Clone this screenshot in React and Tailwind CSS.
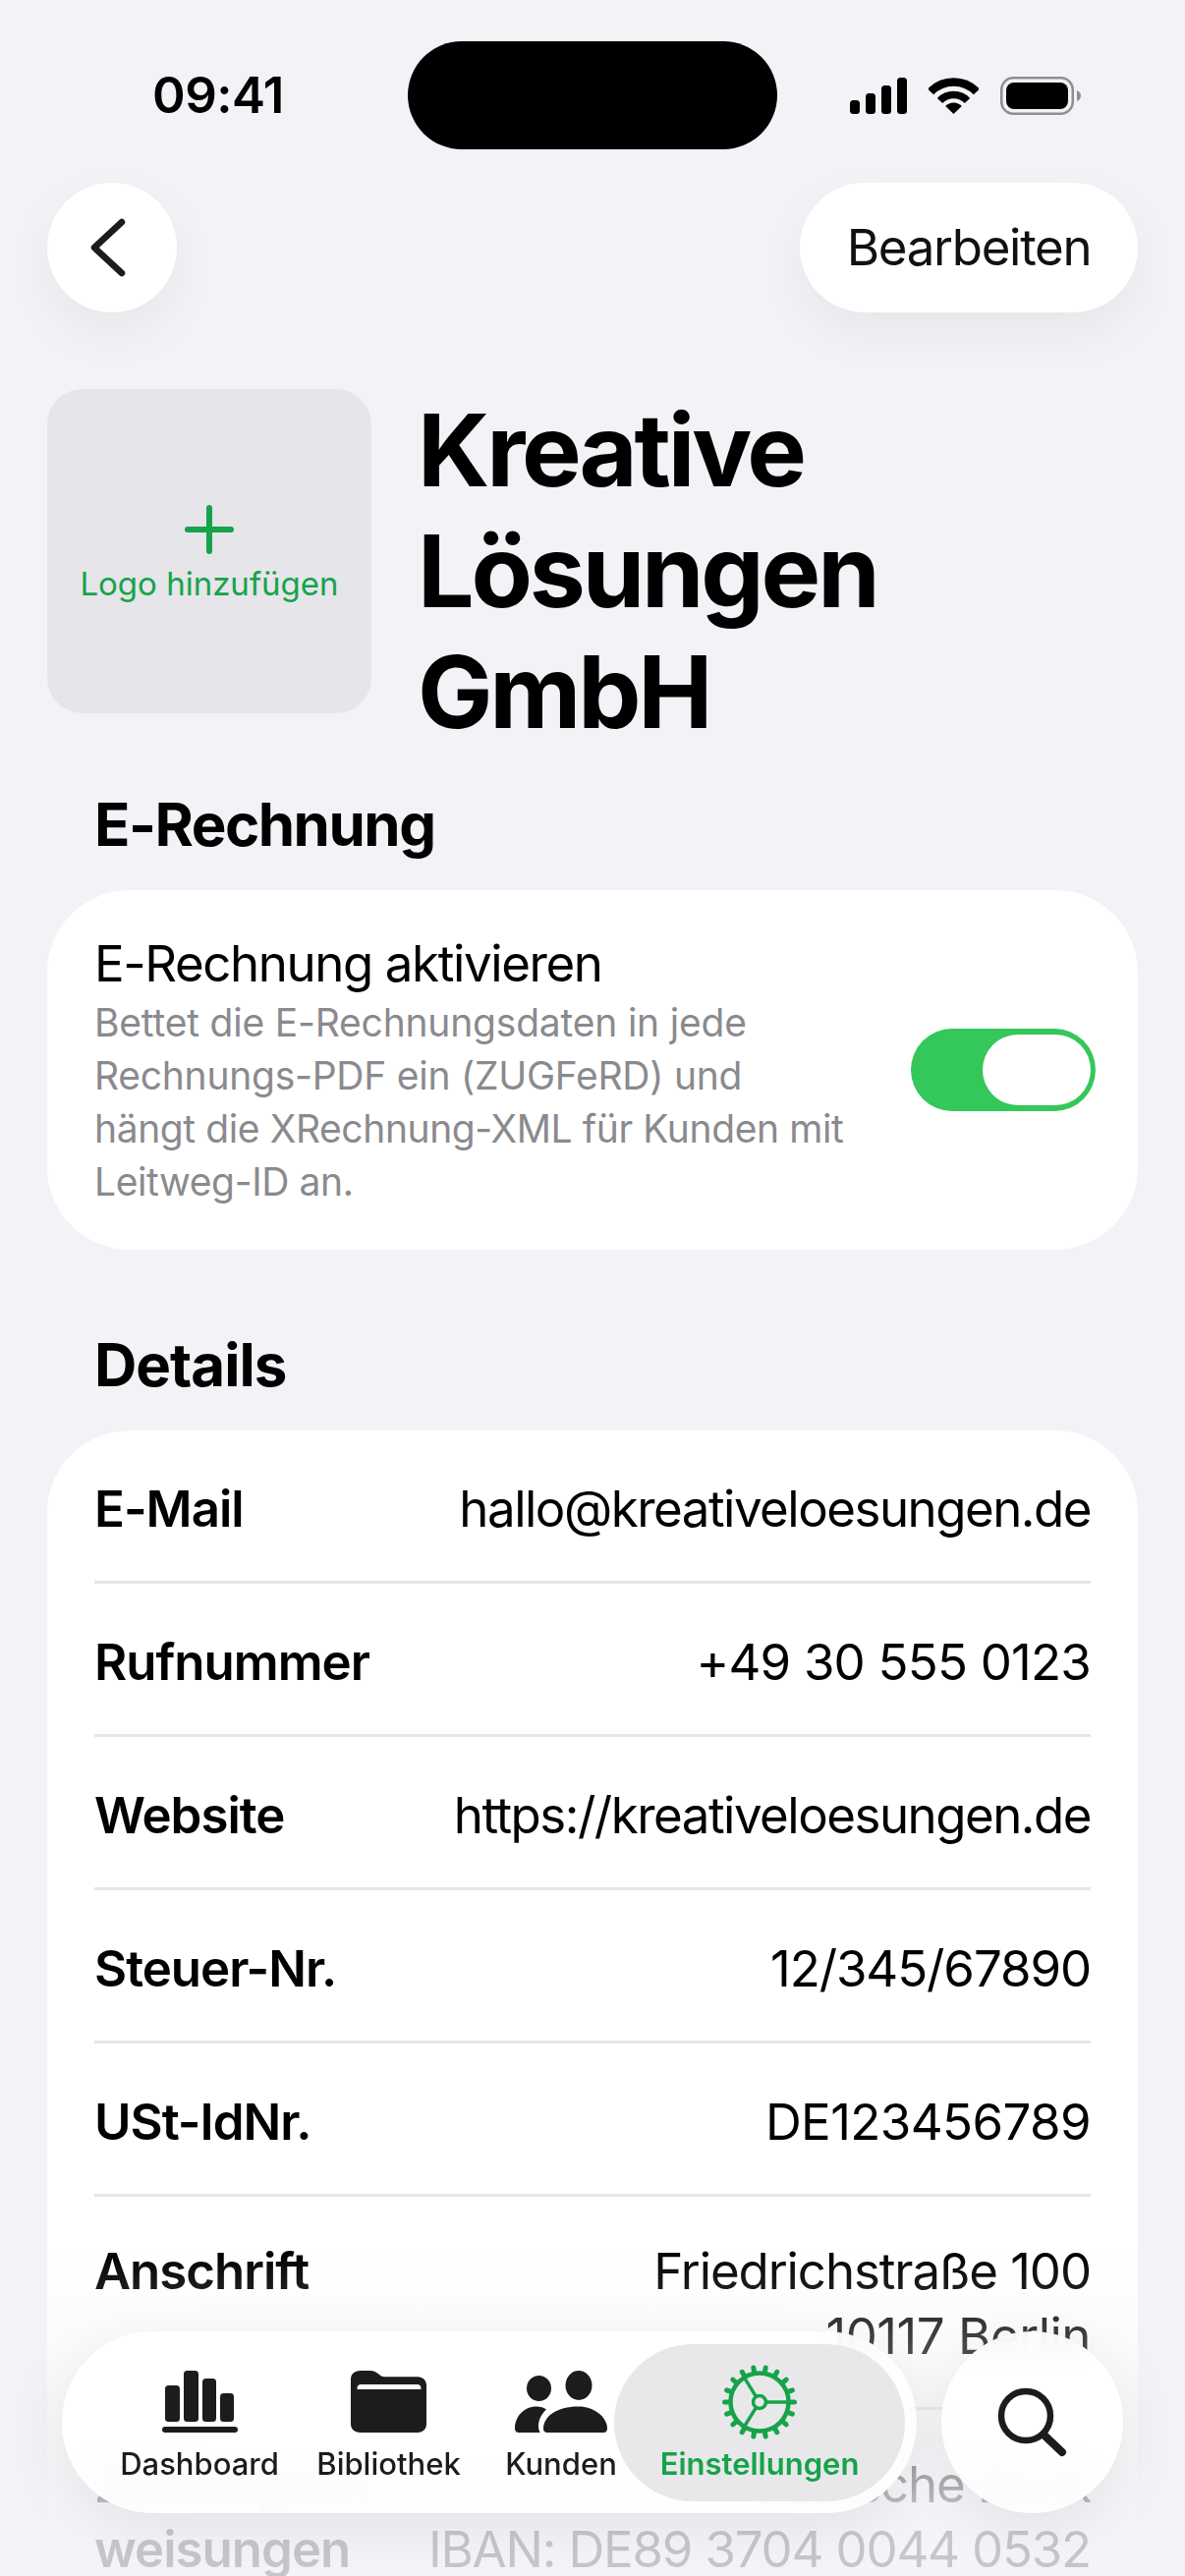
import React from "react";

const rows = [
  ["E-Mail", [["hallo@kreativeloesungen.de", "tracking-[-1.5px]"]]],
  ["Rufnummer", [["+49 30 555 0123", "tracking-[-0.8px]"]]],
  ["Website", [["https://kreativeloesungen.de", "tracking-[-1.5px]"]]],
  ["Steuer-Nr.", [["12/345/67890", "tracking-[-1.1px]"]]],
  ["USt-IdNr.", [["DE123456789", "tracking-[-0.6px]"]]],
];

function Signal() {
  return (
    <svg width="58" height="37" viewBox="0 0 58 37" fill="#000">
      <rect x="0" y="23" width="10" height="14" rx="3.5" />
      <rect x="16" y="16" width="10" height="21" rx="3.5" />
      <rect x="32" y="8" width="10" height="29" rx="3.5" />
      <rect x="48" y="0" width="10" height="37" rx="3.5" />
    </svg>
  );
}

function Wifi() {
  return (
    <svg width="51" height="37" viewBox="0 0 51 37" fill="none">
      <path d="M2.1 14.4A32.5 32.5 0 0 1 48.9 14.4" stroke="#000" strokeWidth="8.5" />
      <path d="M11.5 23.5A19.5 19.5 0 0 1 39.5 23.5" stroke="#000" strokeWidth="7.5" />
      <path d="M25.5 37L17.2 29A11.5 11.5 0 0 1 33.8 29Z" fill="#000" />
    </svg>
  );
}

function Battery() {
  return (
    <svg width="82" height="39" viewBox="0 0 82 39" fill="none">
      <rect x="1.25" y="1.25" width="72.5" height="36.5" rx="12" stroke="#8e8e93" strokeWidth="2.5" />
      <rect x="6" y="6" width="63" height="27" rx="8" fill="#000" />
      <path d="M78 14C80.5 15 82 17 82 19.5C82 22 80.5 24 78 25Z" fill="#8e8e93" />
    </svg>
  );
}

function DashboardIcon() {
  return (
    <svg width="77" height="63" viewBox="0 0 77 63" fill="#1c1c1e" className="mt-[6px]">
      <rect x="3" y="15" width="15" height="37" rx="3.5" />
      <rect x="22" y="0" width="15" height="52" rx="3.5" />
      <rect x="41" y="8" width="14" height="44" rx="3.5" />
      <rect x="59" y="23" width="14" height="29" rx="3.5" />
      <rect x="0" y="57" width="77" height="6" rx="3" />
    </svg>
  );
}

function FolderIcon() {
  return (
    <svg width="77" height="63" viewBox="0 0 77 63" className="mt-[6px]">
      <path
        d="M10 0H20C23 0 25 1 27 2.5L31 5.5C32 6 33 6.2 34 6.2H68C73.5 6.2 77 9.7 77 15V54C77 59.5 73.5 63 68 63H10C3.5 63 0 59.5 0 54V9C0 3.5 3.5 0 10 0Z"
        fill="#1c1c1e"
      />
      <path d="M6.5 19V18C6.5 15.5 8 14 10.5 14H67.5C70 14 71.5 15.5 71.5 18V19Z" fill="#fff" />
    </svg>
  );
}

function PeopleIcon() {
  return (
    <svg width="94" height="63" viewBox="0 0 94 63" fill="#1c1c1e" className="mt-[6px]">
      <ellipse cx="24.5" cy="18" rx="12.5" ry="13" />
      <ellipse cx="65" cy="15" rx="13.5" ry="15" />
      <path d="M0 59C0 47 9 36.5 22 36.5C26 36.5 29.5 37.5 32 39.5C27 44 24 50 24 57C24 59 24.5 61 25.5 63H4C1.5 63 0 61.5 0 59Z" />
      <path d="M29 59C29 47 42 36.5 65 36.5C80 36.5 94 47 94 59C94 61.5 92.5 63 90 63H33C30.5 63 29 61.5 29 59Z" />
    </svg>
  );
}

function GearIcon() {
  const teeth = Array.from({ length: 18 }, (_, i) => (i * 20 * Math.PI) / 180);
  const spokes = [0, 122, 238].map((a) => (a * Math.PI) / 180);
  const c = "#16a34a";
  return (
    <svg width="76" height="76" viewBox="-38 -38 76 76" fill="none" stroke={c}>
      <circle r="29.5" strokeWidth="4.5" />
      {teeth.map((a, i) => (
        <line
          key={i}
          x1={31 * Math.cos(a)}
          y1={31 * Math.sin(a)}
          x2={35.5 * Math.cos(a)}
          y2={35.5 * Math.sin(a)}
          strokeWidth="5"
          strokeLinecap="round"
        />
      ))}
      {spokes.map((a, i) => (
        <line
          key={i}
          x1={7 * Math.cos(a)}
          y1={-7 * Math.sin(a)}
          x2={29 * Math.cos(a)}
          y2={-29 * Math.sin(a)}
          strokeWidth="3.5"
        />
      ))}
      <circle r="6.5" strokeWidth="3.5" />
    </svg>
  );
}

function Row({ label, lines, top }) {
  return (
    <div className={`flex justify-between ${top ? "items-start pt-[43px] pb-[39px]" : "items-center min-h-[153px] pt-[6px]"}`}>
      <div className="text-[51px] leading-[66px] font-semibold tracking-[-1px] text-black">{label}</div>
      <div className="text-[51px] leading-[66px] text-right text-black">
        {lines.map(([text, cls]) => (
          <div key={text} className={`whitespace-nowrap ${cls}`}>{text}</div>
        ))}
      </div>
    </div>
  );
}

function Tab({ icon, label, className, labelClass }) {
  return (
    <div className={`flex flex-col items-center ${className}`}>
      <div className="h-[76px] flex justify-center">{icon}</div>
      <div className={`mt-[7px] text-[31px] leading-[36px] whitespace-nowrap ${labelClass}`}>{label}</div>
    </div>
  );
}

export default function App() {
  return (
    <div className="relative w-[1206px] h-[2622px] overflow-hidden bg-[#f2f2f7] font-['Inter','Noto_Sans',sans-serif] text-black">
      {/* status bar */}
      <div className="flex items-center pt-[42px] h-[152px] pl-[155px]">
        <div className="w-[260px] text-[51px] leading-[60px] font-semibold tracking-[-0.5px]">09:41</div>
        <div className="w-[376px] h-[110px] rounded-full bg-black" />
        <div className="ml-[74px] flex items-center">
          <Signal />
          <div className="ml-[22px]"><Wifi /></div>
          <div className="ml-[22px]"><Battery /></div>
        </div>
      </div>

      {/* nav */}
      <div className="mt-[34px] px-12 flex justify-between">
        <div className="w-[132px] h-[132px] rounded-full bg-white shadow-[0_20px_50px_rgba(0,0,0,0.05)] flex items-center justify-center">
          <svg width="40" height="60" viewBox="0 0 40 60" fill="none" className="-ml-[9px]">
            <path d="M34 4L6 30L34 56" stroke="#1c1c1e" strokeWidth="6.5" strokeLinecap="round" strokeLinejoin="round" />
          </svg>
        </div>
        <div className="w-[344px] h-[132px] rounded-full bg-white shadow-[0_20px_50px_rgba(0,0,0,0.05)] flex items-center justify-center text-[51px] tracking-[-1.3px] text-[#111]">
          Bearbeiten
        </div>
      </div>

      {/* header */}
      <div className="mt-[78px] px-12 flex gap-[47px]">
        <div className="w-[330px] h-[330px] rounded-[36px] bg-[#e5e5ea] flex flex-col items-center">
          <svg width="50" height="50" viewBox="0 0 50 50" className="mt-[118px]" fill="#16a34a">
            <rect x="22" y="0" width="6" height="50" rx="3" />
            <rect x="0" y="22" width="50" height="6" rx="3" />
          </svg>
          <div className="mt-[10px] text-[33px] leading-[40px] text-[#16a34a] whitespace-nowrap">Logo hinzufügen</div>
        </div>
        <div className="mt-[1px] -mb-[3px] text-[102px] leading-[123px] font-bold tracking-[-3.2px]">
          Kreative<br />Lösungen<br />GmbH
        </div>
      </div>

      {/* E-Rechnung */}
      <div className="mt-[40px] px-12">
        <div className="pl-[48px] text-[60px] leading-[72px] font-bold tracking-[-1.5px]">E-Rechnung</div>
        <div className="mt-[31px] rounded-[84px] bg-white pl-[48px] pr-[43px] pt-[45px] pb-[42px] flex items-center justify-between">
          <div>
            <div className="text-[51px] leading-[60px] tracking-[-1.4px] text-black">E-Rechnung aktivieren</div>
            <div className="mt-[3px] text-[39px] leading-[54px] text-[#8a8a8e] whitespace-nowrap">
              <div className="tracking-[-0.2px]">Bettet die E-Rechnungsdaten in jede</div>
              <div className="tracking-[-0.25px]">Rechnungs-PDF ein (ZUGFeRD) und</div>
              <div className="tracking-[-0.4px]">hängt die XRechnung-XML für Kunden mit</div>
              <div className="tracking-[-0.4px]">Leitweg-ID an.</div>
            </div>
          </div>
          <div className="-mt-[3px] w-[188px] h-[84px] rounded-full bg-[#34c759] flex items-center justify-end pr-[5px]">
            <div className="w-[110px] h-[72px] rounded-full bg-white" />
          </div>
        </div>

        {/* Details */}
        <div className="mt-[81px] pl-[48px] text-[60px] leading-[72px] font-bold tracking-[-1px]">Details</div>
        <div className="mt-[31px] rounded-[84px] bg-white pl-[48px] pr-[48px]">
          {rows.map(([label, lines]) => (
            <div key={label} className="border-b-[3px] border-[#e6e6e8]">
              <Row label={label} lines={lines} />
            </div>
          ))}
          <div className="border-b-[3px] border-[#e6e6e8]">
            <Row
              label="Anschrift"
              lines={[
                ["Friedrichstraße 100", "tracking-[-1.1px]"],
                ["10117 Berlin", "tracking-[-0.5px]"],
              ]}
              top
            />
          </div>
          <Row
            label={<>Zahlungsan-<br />weisungen</>}
            lines={[
              ["Deutsche Bank", "tracking-[-1.2px]"],
              ["IBAN: DE89 3704 0044 0532", "tracking-[-1.2px]"],
            ]}
            top
          />
        </div>
      </div>

      {/* fade */}
      <div className="absolute left-0 right-0 bottom-0 h-[332px] bg-[linear-gradient(to_bottom,rgba(242,242,247,0)_0%,rgba(242,242,247,0.82)_82%)]" />

      {/* tab bar */}
      <div className="absolute left-[63px] bottom-[64px] flex gap-[25px]">
        <div className="w-[870px] h-[185px] rounded-full bg-white/90 backdrop-blur-md shadow-[0_12px_60px_rgba(0,0,0,0.08)] flex items-start pl-[61px]">
          <Tab icon={<DashboardIcon />} label="Dashboard" className="w-[158px] pt-[34px]" labelClass="font-medium text-[#1c1c1e]" />
          <Tab icon={<FolderIcon />} label="Bibliothek" className="w-[145px] pt-[34px] ml-[41px]" labelClass="font-medium text-[#1c1c1e]" />
          <Tab icon={<PeopleIcon />} label="Kunden" className="w-[108px] pt-[34px] ml-[49px]" labelClass="font-medium text-[#1c1c1e]" />
          <div className="mt-[13px] w-[296px] h-[160px] rounded-full bg-[#e8e8ea]">
            <Tab icon={<GearIcon />} label="Einstellungen" className="pt-[21px]" labelClass="font-semibold text-[#16a34a]" />
          </div>
        </div>
        <div className="w-[185px] h-[185px] rounded-full bg-white/90 backdrop-blur-md shadow-[0_12px_60px_rgba(0,0,0,0.08)] flex items-center justify-center">
          <svg width="72" height="72" viewBox="0 0 72 72" fill="none" stroke="#1c1c1e" strokeLinecap="round">
            <circle cx="29" cy="29" r="25" strokeWidth="6.5" />
            <path d="M47 48L66 66" strokeWidth="8" />
          </svg>
        </div>
      </div>
    </div>
  );
}
